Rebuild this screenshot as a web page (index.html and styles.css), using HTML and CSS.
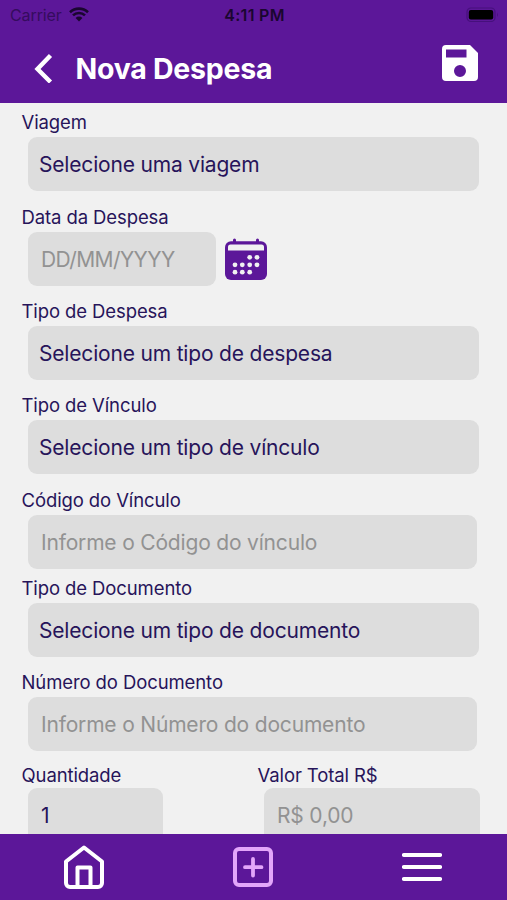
FILE: index.html
```html
<!DOCTYPE html>
<html lang="pt-BR">
<head>
    <meta charset="UTF-8">
    <meta name="viewport" content="width=device-width, initial-scale=1.0">
    <title>Nova Despesa</title>
    <link rel="stylesheet" href="styles.css">
</head>
<body>
    <header class="header">
        <div class="status-bar">
            <div class="carrier">
                <span>Carrier</span>
                <svg class="wifi" width="20" height="15" viewBox="0 0 20 15">
                    <path d="M1 5.2a13 13 0 0 1 18 0M4 8.4a8.6 8.6 0 0 1 12 0" fill="none" stroke="#1a0630" stroke-width="2.6"/>
                    <path d="M10 14.5l-3.4-3.6a4.8 4.8 0 0 1 6.8 0z" fill="#1a0630"/>
                </svg>
            </div>
            <span class="clock">4:11 PM</span>
            <div class="battery-container">
                <svg width="33" height="16" viewBox="0 0 33 16">
                    <rect x="1" y="1" width="28" height="13.500" rx="4" fill="none" stroke="#46107c" stroke-width="1.200"/>
                    <rect x="2.800" y="3" width="24.400" height="9.600" rx="2" fill="#000"/>
                    <path d="M31 5.500q1.800 2.200 0 4.500z" fill="#46107c"/>
                </svg>
            </div>
        </div>
        <div class="title-bar">
            <svg class="back" width="20" height="30" viewBox="0 0 20 30">
                <path d="M17.500 2.500L4.500 16l13 13" fill="none" stroke="#fff" stroke-width="4.400"/>
            </svg>
            <h1>Nova Despesa</h1>
            <svg class="save" width="36" height="36" viewBox="0 0 36 36">
                <path d="M4 0h24l8 8v24a4 4 0 0 1-4 4H4a4 4 0 0 1-4-4V4a4 4 0 0 1 4-4zM4 4.500v8h20.500v-8zM18 20a6 6 0 1 0 0 12 6 6 0 0 0 0-12z" fill="#fff" fill-rule="evenodd"/>
            </svg>
        </div>
    </header>

    <main class="form">
        <div class="group">
            <label>Viagem</label>
            <div class="select">Selecione uma viagem</div>
        </div>
        <div class="group">
            <label for="data">Data da Despesa</label>
            <div class="date-row">
                <input type="text" id="data" class="date" placeholder="DD/MM/YYYY">
                <svg width="42" height="42" viewBox="0 0 42 42">
                    <path d="M9.500 2v4M32.500 2v4" stroke="#5c1799" stroke-width="3" stroke-linecap="round"/>
                    <rect y="3.200" width="42" height="38.800" rx="6" fill="#5c1799"/>
                    <path d="M3 12.500V9A2.500 2.500 0 0 1 5.500 6.500h31A2.500 2.500 0 0 1 39 9v3.500z" fill="#f1f1f1"/>
                    <g fill="#f1f1f1">
                        <circle cx="24.700" cy="19.300" r="2.400"/>
                        <circle cx="32" cy="19.300" r="2.400"/>
                        <circle cx="10" cy="26.800" r="2.400"/>
                        <circle cx="17.300" cy="26.800" r="2.400"/>
                        <circle cx="24.700" cy="26.800" r="2.400"/>
                        <circle cx="32" cy="26.800" r="2.400"/>
                        <circle cx="10" cy="34.200" r="2.400"/>
                        <circle cx="17.300" cy="34.200" r="2.400"/>
                        <circle cx="24.700" cy="34.200" r="2.400"/>
                    </g>
                </svg>
            </div>
        </div>
        <div class="group">
            <label>Tipo de Despesa</label>
            <div class="select">Selecione um tipo de despesa</div>
        </div>
        <div class="group">
            <label>Tipo de Vínculo</label>
            <div class="select">Selecione um tipo de vínculo</div>
        </div>
        <div class="group group-short">
            <label for="codigo">Código do Vínculo</label>
            <input type="text" id="codigo" placeholder="Informe o Código do vínculo">
        </div>
        <div class="group">
            <label>Tipo de Documento</label>
            <div class="select">Selecione um tipo de documento</div>
        </div>
        <div class="group">
            <label for="numero">Número do Documento</label>
            <input type="text" id="numero" placeholder="Informe o Número do documento">
        </div>
        <div class="row">
            <div class="group">
                <label for="quantidade">Quantidade</label>
                <input type="text" id="quantidade" class="quantity" value="1">
            </div>
            <div class="group">
                <label for="valor">Valor Total R$</label>
                <input type="text" id="valor" class="total" placeholder="R$ 0,00">
            </div>
        </div>
    </main>

    <nav class="tab-bar">
        <a class="tab">
            <svg width="42" height="44" viewBox="0 0 42 44">
                <path d="M3 16.500L21 2.500l18 14V38a4 4 0 0 1-4 4H7a4 4 0 0 1-4-4z" fill="none" stroke="#fff" stroke-width="4" stroke-linejoin="round"/>
                <path d="M14.500 42V22.500h13V42" fill="none" stroke="#fff" stroke-width="4" stroke-linejoin="round"/>
            </svg>
        </a>
        <a class="tab">
            <svg width="40" height="40" viewBox="0 0 40 40">
                <rect x="2" y="2" width="36" height="36" rx="4" fill="none" stroke="#e3a6fa" stroke-width="4"/>
                <path d="M20 12v16.500M12 20.200h16.500" stroke="#e3a6fa" stroke-width="3.800" stroke-linecap="round"/>
            </svg>
        </a>
        <a class="tab">
            <svg width="40" height="30" viewBox="0 0 40 30">
                <path d="M2 3h36M2 15h36M2 27h36" stroke="#fff" stroke-width="4.200" stroke-linecap="round"/>
            </svg>
        </a>
    </nav>
</body>
</html>
```

FILE: styles.css
```css
* {
    box-sizing: border-box;
}
body {
    margin: 0;
    height: 100vh;
    display: flex;
    flex-direction: column;
    overflow: hidden;
    background-color: #f1f1f1;
    color: #27145a;
    font-family: Inter, "Liberation Sans", sans-serif;
}
svg {
    display: block;
    flex-shrink: 0;
}

/* Header */
.header {
    height: 103px;
    flex-shrink: 0;
    background-color: #5c1799;
}
.status-bar {
    display: grid;
    grid-template-columns: 1fr auto 1fr;
    align-items: center;
    height: 29px;
    padding: 0 8px 0 10px;
    font-size: 16px;
    color: #1a0630;
}
.carrier {
    display: flex;
    align-items: center;
    gap: 7px;
    color: #350c5e;
    letter-spacing: -0.1px;
}
.clock {
    font-weight: 600;
    letter-spacing: 0.3px;
}
.battery-container {
    display: flex;
    justify-content: flex-end;
}
.title-bar {
    display: flex;
    align-items: center;
    height: 74px;
    padding: 4px 29px 0 33px;
}
.title-bar h1 {
    margin: 0 0 0 22.500px;
    font-size: 28.500px;
    font-weight: 700;
    letter-spacing: -0.25px;
    color: #fff;
}
.save {
    margin: -11px 0 0 auto;
}

/* Form */
.form {
    flex: 1;
    min-height: 0;
    overflow: hidden;
    padding: 5.300px 28px 0 21.500px;
}
.group {
    margin-bottom: 11.400px;
}
.group-short {
    margin-bottom: 5px;
}
label {
    display: block;
    height: 29px;
    line-height: 28px;
    font-size: 18.500px;
    letter-spacing: -0.1px;
    white-space: nowrap;
}
.select,
input {
    display: block;
    height: 54px;
    margin-left: 6.500px;
    border: none;
    border-radius: 9px;
    background-color: #ddd;
    color: #27145a;
    font-family: inherit;
    font-size: 21px;
    letter-spacing: -0.18px;
}
.select {
    padding: 1px 0 0 11px;
    line-height: 54px;
}
input {
    width: 448.500px;
    padding: 1px 13px 0;
    outline: none;
}
input::placeholder {
    color: #929292;
    opacity: 1;
}
.date-row {
    display: flex;
    align-items: center;
    gap: 9px;
}
.date {
    width: 188px;
    letter-spacing: -0.6px;
}
.row {
    display: grid;
    grid-template-columns: 236px 1fr;
}
.row label {
    height: 25px;
    line-height: 25px;
}
.quantity {
    width: 135px;
}
.total {
    width: 216px;
}

/* Bottom tabs */
.tab-bar {
    display: flex;
    height: 66px;
    flex-shrink: 0;
    padding-right: 1px;
    background-color: #5c1799;
}
.tab {
    flex: 1;
    display: flex;
    align-items: center;
    justify-content: center;
}
```
